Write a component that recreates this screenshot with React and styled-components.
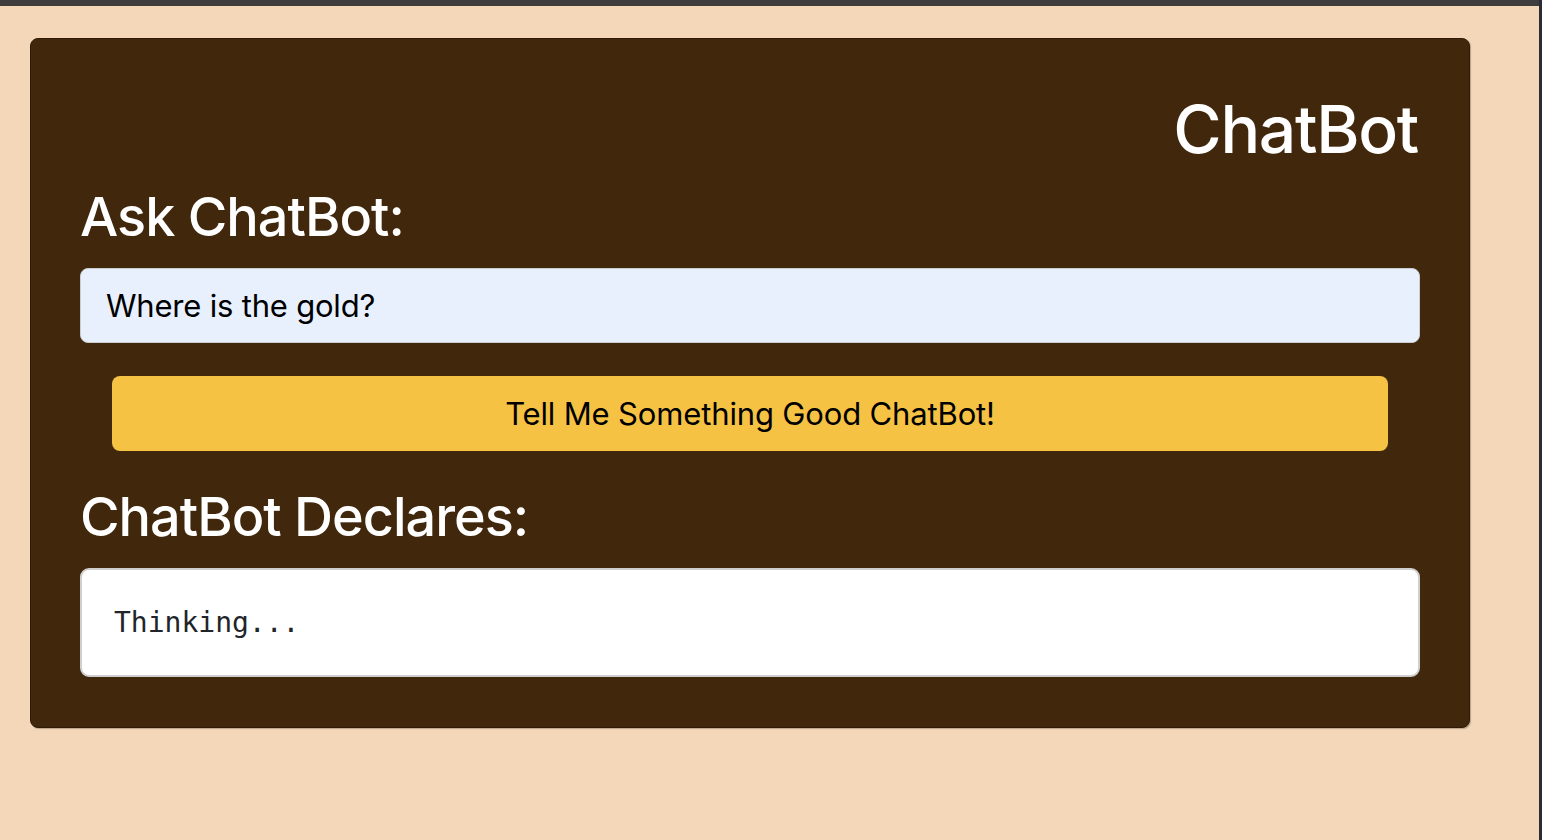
import React from 'react';
import styled, {createGlobalStyle} from 'styled-components';

const GlobalStyle = createGlobalStyle`
  html, body {
    margin: 0;
    padding: 0;
    background: #f4d7b9;
    font-family: Inter, "Noto Sans", sans-serif;
  }
`;

const Window = styled.div`
  display: flex;
  flex-direction: column;
  width: 1542px;
  height: 840px;
  background: #f4d7b9;
  border-right: 3px solid #2b2d33;
  box-sizing: border-box;
  overflow: hidden;
`;

const TopBar = styled.div`
  height: 6px;
  background: #3d3d3d;
  flex-shrink: 0;
`;

const Page = styled.main`
  padding: 32px 0 0 30px;
`;

const Card = styled.section`
  display: flex;
  flex-direction: column;
  width: 1440px;
  box-sizing: border-box;
  padding: 57px 49px 50px 49px;
  background: #41270b;
  border: 1px solid #2e1a05;
  border-radius: 8px;
  box-shadow: 1px 1px 1px rgba(0, 0, 0, 0.25);
`;

const Title = styled.h1`
  margin: 0;
  font-size: 66px;
  line-height: 1;
  font-weight: 500;
  letter-spacing: -1.3px;
  color: #ffffff;
  text-align: right;
  padding-right: 2px;
`;

const Heading = styled.h2`
  margin: ${p => p.$top}px 0 24px;
  font-size: 54px;
  line-height: 1;
  font-weight: 500;
  color: #ffffff;
  letter-spacing: -1px;
`;

const Input = styled.input`
  height: 75px;
  box-sizing: border-box;
  padding: 0 25px;
  background: #e8f0fe;
  border: 1px solid #c9ccd1;
  border-radius: 8px;
  font-family: Inter, "Noto Sans", sans-serif;
  font-size: 31px;
  letter-spacing: -0.2px;
  color: #000000;
  outline: none;
`;

const AskButton = styled.button`
  margin: 33px 32px 0;
  height: 75px;
  background: #f6c244;
  border: none;
  border-radius: 8px;
  font-family: Inter, "Noto Sans", sans-serif;
  font-size: 31px;
  letter-spacing: -0.15px;
  color: #000000;
  cursor: pointer;
`;

const Output = styled.pre`
  display: flex;
  align-items: center;
  margin: 0;
  height: 109px;
  box-sizing: border-box;
  padding: 0 32px;
  background: #ffffff;
  border: 2px solid #cfcfcf;
  border-radius: 9px;
  font-family: "DejaVu Sans Mono", "Liberation Mono", monospace;
  font-size: 28px;
  color: #212529;
`;

export default function App() {
  return (
    <>
      <GlobalStyle/>
      <Window>
        <TopBar/>
        <Page>
          <Card>
            <Title>ChatBot</Title>
            <Heading $top={28}>Ask ChatBot:</Heading>
            <Input defaultValue="Where is the gold?"/>
            <AskButton>Tell Me Something Good ChatBot!</AskButton>
            <Heading $top={39}>ChatBot Declares:</Heading>
            <Output>Thinking...</Output>
          </Card>
        </Page>
      </Window>
    </>
  );
}
